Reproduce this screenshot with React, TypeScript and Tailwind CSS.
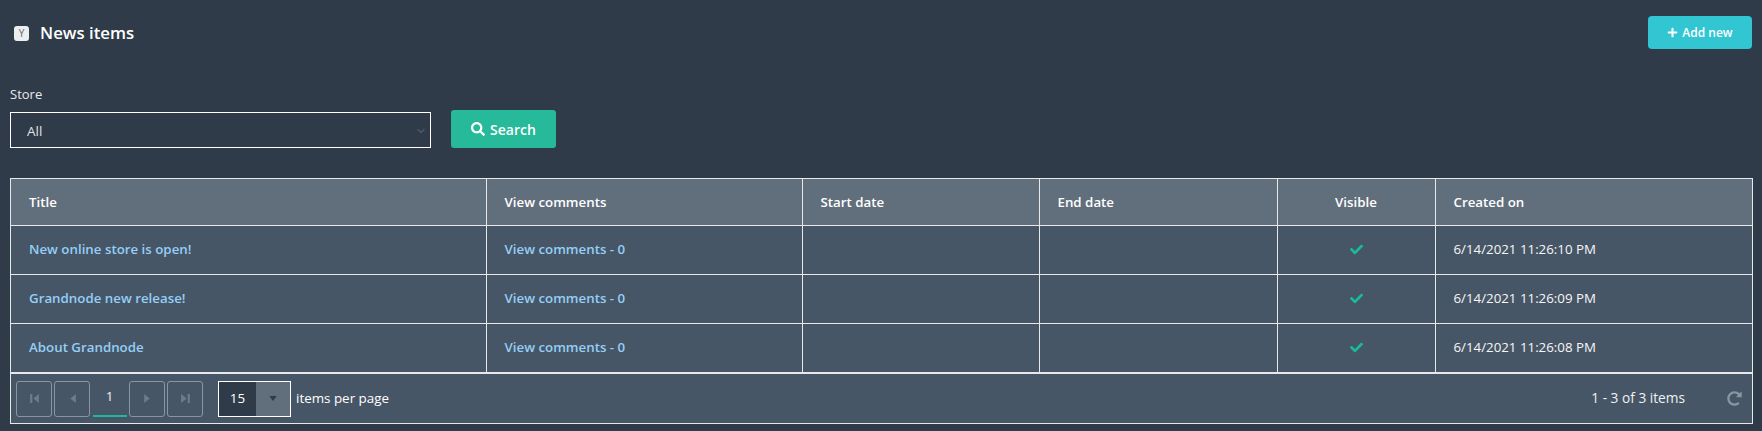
import React from "react";
import { ChevronDown } from "lucide-react";
import { FaCheck, FaPlus, FaRedoAlt, FaSearch } from "react-icons/fa";

const rows = [
  { title: "New online store is open!", created: "6/14/2021 11:26:10 PM" },
  { title: "Grandnode new release!", created: "6/14/2021 11:26:09 PM" },
  { title: "About Grandnode", created: "6/14/2021 11:26:08 PM" },
];

function PagerButton({ path }: { path: string }) {
  return (
    <button className="flex h-9 w-9 items-center justify-center rounded-[3px] border border-[#8a95a1]">
      <svg width="11" height="11" viewBox="0 0 10 10" fill="#6f7b88">
        <path d={path} />
      </svg>
    </button>
  );
}

export default function App() {
  return (
    <div className="h-[431px] w-[1762px] overflow-hidden bg-[#2f3b48] font-['Open_Sans','Noto_Sans',sans-serif] text-white">
      <div className="flex items-start justify-between pl-[14px] pr-[10px] pt-4">
        <div className="flex items-center gap-[11px] pt-[4px]">
          <span className="flex h-[15px] w-[15px] items-center justify-center rounded-[3px] bg-[#eceef0] text-[10px] leading-none text-[#5b6672]">
            Y
          </span>
          <h1 className="text-[16.8px] font-semibold leading-[26px]">News items</h1>
        </div>
        <button className="flex h-[33px] w-[104px] items-center justify-center gap-1 rounded-[4px] bg-[#32c5d2] text-[12px] font-semibold">
          <FaPlus className="h-[11px] w-[11px]" />
          Add new
        </button>
      </div>

      <div className="mt-[36px] px-[10px]">
        <label className="block text-[13px] leading-[18px] text-[#e8eaec]">Store</label>
        <div className="mt-[7px] flex items-start gap-5">
          <div className="mt-[2px] flex h-9 w-[421px] items-center justify-between border border-white pl-4 pr-[3px] pt-[2px] text-[13.5px] text-[#dfe2e5]">
            All
            <ChevronDown className="h-3 w-3 text-[#6b7682]" />
          </div>
          <button className="flex h-[38px] w-[105px] items-center justify-center gap-[5px] rounded-[3px] bg-[#26b99a] text-[14px] font-semibold">
            <FaSearch className="h-[14px] w-[14px]" />
            Search
          </button>
        </div>
      </div>

      <div className="mx-[10px] mt-[30px] w-[1743px] border border-[#e6e8ea] bg-[#475666]">
        <table className="w-full table-fixed border-collapse text-[13.3px]">
          <colgroup>
            <col className="w-[475px]" />
            <col className="w-[316px]" />
            <col className="w-[237px]" />
            <col className="w-[238px]" />
            <col className="w-[158px]" />
            <col />
          </colgroup>
          <thead>
            <tr className="h-[46px] bg-[#616e7c] text-left font-semibold">
              <th className="pl-[18px] pt-[2px] font-semibold">Title</th>
              <th className="border-l border-[#e6e8ea] pl-[18px] pt-[2px] font-semibold">View comments</th>
              <th className="border-l border-[#e6e8ea] pl-[18px] pt-[2px] font-semibold">Start date</th>
              <th className="border-l border-[#e6e8ea] pl-[18px] pt-[2px] font-semibold">End date</th>
              <th className="border-l border-[#e6e8ea] pt-[2px] text-center font-semibold">Visible</th>
              <th className="border-l border-[#e6e8ea] pl-[18px] pt-[2px] font-semibold">Created on</th>
            </tr>
          </thead>
          <tbody>
            {rows.map((row) => (
              <tr key={row.title} className="h-[49px] border-t border-[#e6e8ea]">
                <td className="pl-[18px] font-semibold text-[#94cff7]">{row.title}</td>
                <td className="border-l border-[#e6e8ea] pl-[18px] font-semibold text-[#94cff7]">
                  View comments - 0
                </td>
                <td className="border-l border-[#e6e8ea]"></td>
                <td className="border-l border-[#e6e8ea]"></td>
                <td className="border-l border-[#e6e8ea]">
                  <FaCheck className="mx-auto h-[13px] w-[13px] text-[#1abb9c]" />
                </td>
                <td className="border-l border-[#e6e8ea] pl-[18px] text-[#f6f7f8]">{row.created}</td>
              </tr>
            ))}
          </tbody>
        </table>

        <div className="flex h-[51px] items-center border-t-2 border-[#e6e8ea] pl-[5px] pr-[10px] text-[13.4px]">
          <div className="flex items-center gap-[2px]">
            <PagerButton path="M1 1h2v8H1zM9 1v8L4 5z" />
            <PagerButton path="M8 1v8L3 5z" />
            <span className="relative flex h-9 w-[35px] items-center justify-center pb-1 text-[#eef0f2]">
              1
              <span className="absolute bottom-0 left-[1px] right-0 h-[2px] bg-[#1abb9c]" />
            </span>
            <PagerButton path="M2 1v8l5-4z" />
            <PagerButton path="M1 1v8l5-4zM7 1h2v8H7z" />
          </div>
          <div className="ml-[15px] flex h-9 w-[73px] border border-white">
            <span className="flex w-[37px] items-center justify-center bg-[#2f3b48]">15</span>
            <span className="flex flex-1 items-center justify-center bg-[#616e7c]">
              <svg width="8" height="5" viewBox="0 0 9 6" fill="#2f3b48">
                <path d="M0 0h9L4.5 6z" />
              </svg>
            </span>
          </div>
          <span className="ml-[5px]">items per page</span>
          <span className="ml-auto mr-[42px] text-[13.7px] text-[#eef0f2]">1 - 3 of 3 items</span>
          <FaRedoAlt className="h-[15px] w-[15px] text-[#8a95a1]" />
        </div>
      </div>
    </div>
  );
}
